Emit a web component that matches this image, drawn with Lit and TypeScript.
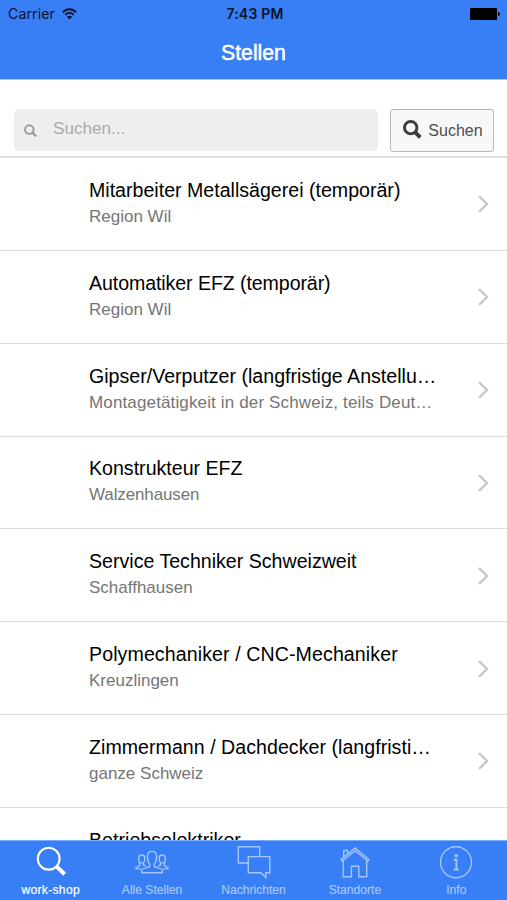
import { LitElement, html, css, svg } from "lit";
import { customElement } from "lit/decorators.js";
import { styleMap } from "lit/directives/style-map.js";

interface Job {
  title: string;
  place?: string;
  titleTracking?: number;
  placeTracking?: number;
}

const jobs: Job[] = [
  { title: "Mitarbeiter Metallsägerei (temporär)", place: "Region Wil" },
  { title: "Automatiker EFZ (temporär)", place: "Region Wil", titleTracking: -0.09 },
  {
    title: "Gipser/Verputzer (langfristige Anstellu…",
    place: "Montagetätigkeit in der Schweiz, teils Deut…",
    placeTracking: 0.14,
  },
  { title: "Konstrukteur EFZ", place: "Walzenhausen", placeTracking: -0.12 },
  { title: "Service Techniker Schweizweit", place: "Schaffhausen" },
  { title: "Polymechaniker / CNC-Mechaniker", place: "Kreuzlingen", titleTracking: 0.09 },
  { title: "Zimmermann / Dachdecker (langfristi…", place: "ganze Schweiz", titleTracking: 0.03 },
  { title: "Betriebselektriker", titleTracking: 0.03 },
];

const tracking = (value = 0) => styleMap({ letterSpacing: `${value}px` });

const tabs = [
  {
    label: "work-shop",
    icon: svg`<circle cx="16.700" cy="14.700" r="10.900" stroke-width="2.100"/><path d="M24.300 22.200l8.400 8" stroke-width="4"/>`,
  },
  {
    label: "Alle Stellen",
    icon: svg`<path d="M16.700 22.500v-2.300c-1.700-1.900-2.300-4.800-2.300-7.600 0-3.500 1.500-5.200 4.600-5.200s4.600 1.700 4.600 5.200c0 2.800-.6 5.700-2.300 7.600v2.300c.8 1.200 7.200 1.200 8 3.700v2.600H8.700v-2.600c.8-2.500 7.200-2.500 8-3.700z"/>
      <path d="M12.500 22l-2.100-1v-2.100c1-1 1.500-2.600 1.500-4.300 0-2.500-1-3.600-3.100-3.600s-3.100 1.100-3.100 3.600c0 1.700-.1 3.300 1 4.300v2.700c-.5 1-3.900.8-3.900 3.300H8"/>
      <path d="M5.900 18.900h4.500M27.600 18.900h4.500"/>
      <path d="M25.500 22l2.100-1v-2.100c-1-1-1.500-2.600-1.500-4.300 0-2.500 1-3.600 3.100-3.600s3.100 1.100 3.100 3.600c0 1.700.1 3.300-1 4.300v2.700c.5 1 3.900.8 3.900 3.300H30"/>`,
  },
  {
    label: "Nachrichten",
    icon: svg`<path d="M13 19H3.300V2.700h21.400v9.600"/><path d="M13.300 12.600h21.500v16.200h-4v4.800l-4.900-4.800H13.300z"/>`,
  },
  {
    label: "Standorte",
    icon: svg`<path d="M5 15.500L19 4l14 11.500-1.200 1.500L19 6.600 6.200 17zM7.700 12.600V6.500h3.800v3M7.200 16.200v16.600h8.200V22.300h7.400v10.500h7.900V16.200"/>`,
  },
  {
    label: "Info",
    icon: svg`<circle cx="19" cy="18.300" r="15.500"/><path d="M16.700 15.700h2.700V25.500M16.700 25.500h5" stroke-width="1.900"/><circle cx="19.200" cy="11.700" r="1.800" fill="currentColor" stroke="none"/>`,
  },
];

@customElement("app-root")
export class AppRoot extends LitElement {
  static styles = css`
    :host {
      display: flex;
      flex-direction: column;
      width: 507px;
      height: 900px;
      overflow: hidden;
      background: #fff;
      font-family: "Liberation Sans", Arial, sans-serif;
    }
    svg { display: block; fill: none; stroke: currentColor; }
    header {
      flex: none;
      box-sizing: border-box;
      height: 79.500px;
      background: #387ef5;
      border-bottom: 1px solid #a5cdfb;
    }
    .status {
      display: grid;
      grid-template-columns: 1fr auto 1fr;
      align-items: center;
      height: 27px;
      padding: 0 7px 0 8px;
      font: 14px/27px Inter, sans-serif;
      color: #07142d;
    }
    .carrier { display: flex; align-items: center; gap: 7px; letter-spacing: 0.150px; }
    .carrier span, .time { padding-top: 1px; line-height: 26px; }
    .time { padding-left: 2px; font-weight: 600; font-size: 14px; letter-spacing: 0.200px; }
    .battery { justify-self: end; color: #000; }
    h1 {
      margin: 0;
      height: 51px;
      text-align: center;
      font: 400 21.200px/51px "Liberation Sans", Arial, sans-serif;
      -webkit-text-stroke: 0.500px #fff;
      color: #fff;
    }
    .search {
      flex: none;
      display: flex;
      box-sizing: border-box;
      height: 78.500px;
      padding: 29.500px 13px 0 14px;
      gap: 12px;
      border-bottom: 2px solid #dedede;
    }
    .field {
      flex: 1;
      display: flex;
      align-items: center;
      height: 42px;
      padding-left: 10px;
      gap: 16px;
      box-sizing: border-box;
      border-radius: 5px;
      background: #eee;
      color: #aaa;
      font-size: 17.100px;
    }
    .field svg { color: #999; }
    .field span { padding-bottom: 3px; }
    button {
      display: flex;
      align-items: center;
      justify-content: center;
      gap: 6px;
      width: 104px;
      height: 43px;
      padding: 0 0 0 2px;
      box-sizing: border-box;
      border: 1.500px solid #b8b8b8;
      border-radius: 3px;
      background: #f8f8f8;
      color: #4d4d4d;
      font: 16px "Liberation Sans", Arial, sans-serif;
    }
    button svg { margin-bottom: 2px; color: #3c3c3c; }
    main { flex: 1; min-height: 0; overflow: hidden; }
    .row {
      display: flex;
      align-items: center;
      box-sizing: border-box;
      height: 92.850px;
      padding: 1px 18px 0 89px;
      border-bottom: 1px solid #dcdcdc;
    }
    .text { flex: 1; height: 55px; white-space: nowrap; }
    h2 { margin: 0; font-size: 19.600px; line-height: 27px; font-weight: 400; color: #000; }
    p { margin: 0; font-size: 17px; line-height: 26px; color: #757575; }
    .chevron { color: #c7c7cc; }
    nav {
      flex: none;
      display: flex;
      box-sizing: border-box;
      height: 60px;
      border-top: 1px solid #78acfa;
      background: #387ef5;
    }
    .tab {
      flex: 1;
      display: flex;
      flex-direction: column;
      align-items: center;
      padding-top: 3px;
      color: #a4c6fd;
      font-size: 12.100px;
      line-height: 16px;
      white-space: nowrap;
    }
    .tab svg { stroke-width: 1.400; }
    .tab span { margin-top: 1px; -webkit-text-stroke: 0.200px currentColor; }
    .active { color: #fff; }
    .active span { letter-spacing: 0.300px; }
  `;

  render() {
    return html`
      <header>
        <div class="status">
          <div class="carrier">
            <span>Carrier</span>
            <svg width="15" height="12" viewBox="0 0 15 12" stroke-width="1.800">
              <path d="M.8 4.300c3.800-4.100 9.600-4.100 13.400 0M3.200 6.900c2.500-2.600 6.100-2.600 8.600 0" />
              <path d="M4.900 8.700c1.500-1.400 3.700-1.400 5.200 0L7.500 11.500z" fill="currentColor" stroke="none" />
            </svg>
          </div>
          <div class="time">7:43 PM</div>
          <svg class="battery" width="30" height="12" viewBox="0 0 30 12">
            <rect width="27" height="12" rx="1" fill="currentColor" stroke="none" />
            <path d="M28 4c2.500.3 2.500 3.700 0 4z" fill="currentColor" stroke="none" />
          </svg>
        </div>
        <h1>Stellen</h1>
      </header>
      <div class="search">
        <div class="field">
          <svg width="13" height="13" viewBox="0 0 13 13">
            <circle cx="5.300" cy="5.600" r="4.300" stroke-width="1.900" /><path d="M8.400 8.600l3.700 3.700" stroke-width="2.400" />
          </svg>
          <span>Suchen...</span>
        </div>
        <button>
          <svg width="19" height="19" viewBox="0 0 19 19">
            <circle cx="7.700" cy="7.700" r="6.200" stroke-width="2.900" /><path d="M12.300 12.300l5 5" stroke-width="4" />
          </svg>
          Suchen
        </button>
      </div>
      <main>
        ${jobs.map(
          (job) => html`<div class="row">
            <div class="text">
              <h2 style=${tracking(job.titleTracking)}>${job.title}</h2>
              ${job.place ? html`<p style=${tracking(job.placeTracking)}>${job.place}</p>` : null}
            </div>
            <svg class="chevron" width="12" height="18" viewBox="0 0 12 18" stroke-width="2.400">
              <path d="M2 1.200l8 7.800-8 7.800" />
            </svg>
          </div>`
        )}
      </main>
      <nav>
        ${tabs.map(
          (tab, i) => html`<div class="tab ${i === 0 ? "active" : ""}">
            <svg width="38" height="37" viewBox="0 0 38 37">${tab.icon}</svg>
            <span>${tab.label}</span>
          </div>`
        )}
      </nav>
    `;
  }
}
